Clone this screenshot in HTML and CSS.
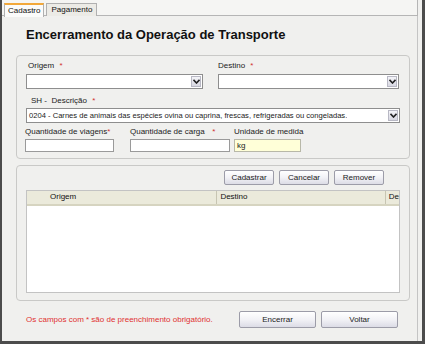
FILE: index.html
```html
<!DOCTYPE html>
<html>
<head>
<meta charset="utf-8">
<link rel="stylesheet" href="styles.css">
</head>
<body>
<div class="window">
  <div class="tabs">
    <div class="tab active">Cadastro</div>
    <div class="tab">Pagamento</div>
  </div>
  <div class="panel">
    <h1 class="title">Encerramento da Operação de Transporte</h1>

    <div class="box box-form">
      <div class="row row-top">
        <div class="field field-origem">
          <label>Origem <span class="req">*</span></label>
          <div class="select"><span class="value"></span><span class="arrow"><svg width="7" height="5" viewBox="0 0 7 5"><path d="M0.5 0.8 L3.5 4 L6.5 0.8" fill="none" stroke="#222" stroke-width="1.6"/></svg></span></div>
        </div>
        <div class="field field-destino">
          <label>Destino <span class="req">*</span></label>
          <div class="select"><span class="value"></span><span class="arrow"><svg width="7" height="5" viewBox="0 0 7 5"><path d="M0.5 0.8 L3.5 4 L6.5 0.8" fill="none" stroke="#222" stroke-width="1.6"/></svg></span></div>
        </div>
      </div>
      <div class="field field-sh">
        <label>SH -&nbsp; Descrição <span class="req">*</span></label>
        <div class="select"><span class="value">0204 - Carnes de animais das espécies ovina ou caprina, frescas, refrigeradas ou congeladas.</span><span class="arrow"><svg width="7" height="5" viewBox="0 0 7 5"><path d="M0.5 0.8 L3.5 4 L6.5 0.8" fill="none" stroke="#222" stroke-width="1.6"/></svg></span></div>
      </div>
      <div class="row row-qtd">
        <div class="field field-viagens">
          <label>Quantidade de viagens<span class="req tight">*</span></label>
          <div class="input"></div>
        </div>
        <div class="field field-carga">
          <label>Quantidade de carga <span class="req">&nbsp;*</span></label>
          <div class="input"></div>
        </div>
        <div class="field field-unidade">
          <label>Unidade de medida</label>
          <div class="input readonly">kg</div>
        </div>
      </div>
    </div>

    <div class="box box-list">
      <div class="actions">
        <button class="btn btn-small">Cadastrar</button>
        <button class="btn btn-small">Cancelar</button>
        <button class="btn btn-small">Remover</button>
      </div>
      <div class="grid">
        <div class="grid-head">
          <div class="col col-origem">Origem</div>
          <div class="col col-destino">Destino</div>
          <div class="col col-de">De</div>
        </div>
        <div class="grid-body"></div>
      </div>
    </div>

    <div class="footer">
      <div class="note">Os campos com * são de preenchimento obrigatório.</div>
      <div class="footer-buttons">
        <button class="btn btn-big">Encerrar</button>
        <button class="btn btn-big">Voltar</button>
      </div>
    </div>
  </div>
</div>
</body>
</html>
```

FILE: styles.css
```css
body {
  margin: 0;
  background: #f0f0ee;
  font-family: "Liberation Sans", Arial, sans-serif;
  font-size: 8px;
  color: #222;
}

.window {
  width: 425px;
  height: 344px;
  box-sizing: border-box;
  border-left: 2px solid #4c4c4c;
  border-right: 3px solid #4c4c4c;
  border-bottom: 3px solid #4c4c4c;
  padding-right: 4px;
  background: #f0f0ee;
  display: flex;
  flex-direction: column;
}

/* tab strip */
.tabs {
  display: flex;
  height: 16px;
  padding: 3px 0 0 2px;
  box-sizing: border-box;
  background: #f5f5f3;
  border-bottom: 1px solid #b5b5b5;
  border-right: 1px solid #b5b5b5;
}
.tab {
  height: 13px;
  line-height: 12px;
  padding: 0 4px;
  margin-right: 2px;
  border: 1px solid #b0b0b0;
  border-bottom: none;
  box-sizing: border-box;
  background: #ecebe6;
  font-size: 8px;
  color: #111;
}
.tab.active {
  height: 14px;
  padding: 0 3px;
  background: #fbfbfa;
  border-top: 2px solid #f2a83a;
  line-height: 11px;
}

.panel {
  flex: 1;
  border-right: 1px solid #c4c4c4;
  padding: 0 6px 0 14px;
  display: flex;
  flex-direction: column;
}

.title {
  margin: 11px 0 0 10px;
  height: 28px;
  font-size: 13px;
  font-weight: bold;
  color: #111;
  line-height: 16px;
}

/* group boxes */
.box {
  border: 1px solid #c9c9c7;
  border-radius: 4px;
  box-sizing: border-box;
  width: 394px;
}
.box-form {
  height: 104px;
  padding: 5px 0 0 9px;
}
.box-list {
  margin-top: 6px;
  height: 136px;
  padding: 4px 0 0 9px;
}

.row {
  display: flex;
}
.field label {
  display: block;
  height: 9px;
  line-height: 9px;
  font-size: 8px;
  color: #222;
}
.req {
  color: #d03030;
  margin-left: 3px;
}
.req.tight {
  margin-left: 0;
}
.field-origem label { padding-left: 2px; }
.field-origem .select { width: 177px; }
.field-destino { margin-left: 15px; }
.field-destino .select { width: 181px; }
.row-top label { margin-bottom: 4px; }

.field-sh { margin-top: 7px; }
.field-sh label { padding-left: 5px; margin-bottom: 3px; }
.field-sh .select { width: 374px; }

.row-qtd { margin-top: 4px; }
.row-qtd label { margin-bottom: 3px; }
.field-viagens .input { width: 89px; margin-left: -1px; }
.field-viagens label { margin-left: -1px; }
.field-carga { margin-left: 16px; }
.field-carga .input { width: 100px; }
.field-unidade { margin-left: 4px; }
.field-unidade .input { width: 67px; }

.select {
  height: 15px;
  box-sizing: border-box;
  border: 1px solid #8e8e8e;
  background: #fff;
  display: flex;
  align-items: center;
  justify-content: space-between;
}
.select .value {
  padding-left: 2px;
  font-size: 7.6px;
  white-space: nowrap;
  overflow: hidden;
}
.select .arrow {
  width: 10px;
  height: 11px;
  margin-right: 1px;
  border: 1px solid #b8b8c4;
  box-sizing: border-box;
  background: linear-gradient(#f4f4f8, #d8d8e2);
  display: flex;
  align-items: center;
  justify-content: center;
}

.input {
  height: 13px;
  box-sizing: border-box;
  border: 1px solid #9a9a9a;
  background: #fff;
  font-size: 8px;
  line-height: 11px;
  padding-left: 2px;
}
.input.readonly {
  background: #ffffd8;
  border-color: #b8b8a8;
}

/* buttons */
.btn {
  font-family: "Liberation Sans", Arial, sans-serif;
  font-size: 8px;
  color: #222;
  border: 1px solid #9c9ca8;
  border-radius: 2px;
  background: linear-gradient(#ffffff, #f2f2f6 50%, #dcdce6);
  padding: 0;
  box-sizing: border-box;
}
.actions {
  display: flex;
  gap: 5px;
  margin-left: 198px;
}
.btn-small {
  width: 50px;
  height: 15px;
}

.grid {
  margin-top: 5px;
  width: 374px;
  height: 103px;
  border: 1px solid #c3c3c3;
  box-sizing: border-box;
  background: #fff;
  margin-left: 0;
}
.grid-head {
  display: flex;
  height: 13px;
  background: #ebeadb;
  border-bottom: 2px solid #d6d4c0;
  line-height: 12px;
  font-size: 8px;
  color: #111;
}
.col-origem {
  width: 167px;
  padding-left: 23px;
  border-right: 1px solid #c7c5b2;
}
.col-destino {
  width: 165px;
  padding-left: 3px;
  border-right: 1px solid #c7c5b2;
}
.col-de {
  padding-left: 3px;
}

.footer {
  display: flex;
  align-items: center;
  height: 37px;
  padding-left: 10px;
}
.note {
  color: #e03030;
  font-size: 8px;
  width: 213px;
}
.footer-buttons {
  display: flex;
  gap: 5px;
}
.btn-big {
  width: 77px;
  height: 17px;
}
```
